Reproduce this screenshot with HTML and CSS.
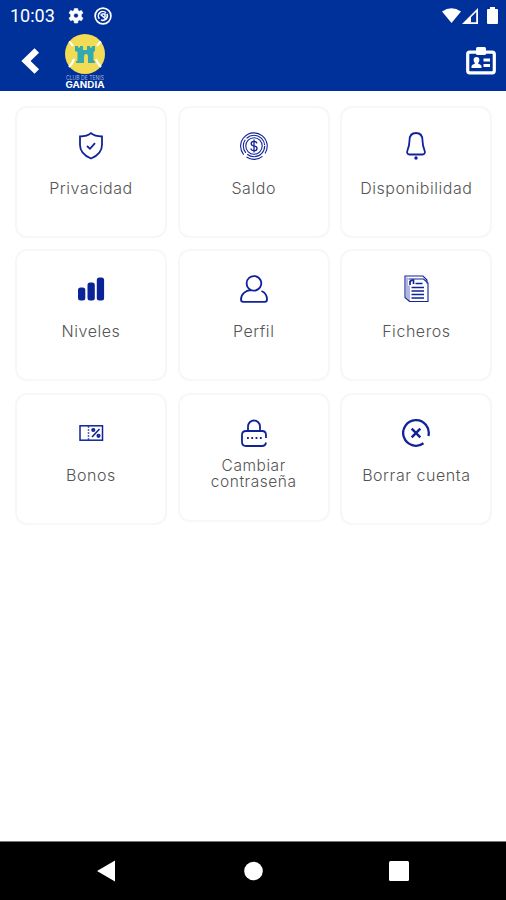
FILE: index.html
```html
<!DOCTYPE html>
<html lang="es">
<head>
  <meta charset="UTF-8" />
  <meta name="viewport" content="width=device-width, initial-scale=1.0">
  <title>Club de Tenis Gandia</title>
  <link rel="stylesheet" href="styles.css">
</head>
<body>

  <header class="header">
    <div class="status-bar">
      <span class="clock">10:03</span>
      <svg class="gear" width="16" height="16" viewBox="0 0 16 16">
        <path fill="#fff" stroke="#fff" stroke-width=".6" fill-rule="evenodd" d="M6.400.4h3.200l.4 2 1.300.8 2.100-.8L15 5l-1.700 1.600v2L15 10.200l-1.600 2.600-2.100-.8-1.300.8-.4 2.200H6.400L6 12.800 4.700 12l-2.100.8L1 10.200l1.700-1.600v-2L1 5l1.600-2.600 2.100.8L6 2.400zM8 5.200a2.400 2.400 0 1 0 0 4.800 2.400 2.400 0 0 0 0-4.800z"/>
      </svg>
      <svg class="sync" width="18" height="18" viewBox="0 0 18 18" fill="none" stroke="#fff">
        <circle cx="9" cy="9" r="7.900" stroke-width="1.700"/>
        <path d="M5.400 11.800a4.500 4.500 0 0 1 6.600-6.100M12.900 6.900a4.500 4.500 0 0 1-6 6" stroke-width="1.600"/>
        <path d="M6.500 7.500l6 5M7.500 7h3.500v3.200" stroke-width="1.500"/>
      </svg>
      <div class="signals">
        <svg width="19" height="15" viewBox="0 0 19 15"><path fill="#fff" d="M0 3.500Q9.500-3 19 3.500L9.500 15z"/></svg>
        <svg width="16" height="16" viewBox="0 0 16 16"><path fill="#fff" fill-rule="evenodd" d="M16 0v16H0zM8.500 9.700v4.500h5.700V4z"/><path fill="#fff" d="M4 13l5-5v6H4z"/></svg>
        <svg class="battery" width="11" height="17" viewBox="0 0 11 17"><path fill="#fff" d="M3 0h5v2h2q1 0 1 1v13q0 1-1 1H1q-1 0-1-1V3q0-1 1-1h2z"/></svg>
      </div>
    </div>

    <div class="app-bar">
      <svg class="back" width="19" height="26" viewBox="0 0 19 26">
        <path d="M15.800 2.500L5 13l10.800 10.500" fill="none" stroke="#fff" stroke-width="6.500"/>
      </svg>
      <svg class="logo" width="42" height="58" viewBox="0 0 42 58">
        <circle cx="21" cy="21" r="20" fill="#f2dc55"/>
        <path d="M5 8.500Q8 11 9 13M37 8.500Q34 11 33 13M5 34Q9 30 10 26M37 34Q33 30 32 26" fill="none" stroke="#fff" stroke-width="2.200"/>
        <path d="M11 13h3v1.500h2V13h3v4h4v-4h3v1.500h2V13h3v5l-1.500 1v8.500l1.500 1V30h-7v-6q0-3-2-3t-2 3v6h-8v-1.500l1.500-1V19L11 18z" fill="#35a9b0"/>
        <text class="logo-small" x="21" y="46.500" textLength="38" lengthAdjust="spacingAndGlyphs">CLUB DE TENIS</text>
        <text class="logo-name" x="21" y="54.500" textLength="39" lengthAdjust="spacingAndGlyphs">GANDIA</text>
      </svg>
      <svg class="badge" width="30" height="28" viewBox="0 0 30 28">
        <rect x="1.700" y="5.200" width="26.600" height="20.600" rx="2" fill="none" stroke="#fff" stroke-width="3.200"/>
        <rect x="10" y="0" width="10" height="8" rx="1.500" fill="#fff"/>
        <circle cx="10.500" cy="13" r="2.900" fill="#fff"/>
        <path d="M5.500 21v-1.500q0-2 3.200-2.500v-2h3.600v2q3.200.5 3.200 2.500V21z" fill="#fff"/>
        <path d="M17.500 13h6.500M17.500 18.500h6.500" stroke="#fff" stroke-width="2.800"/>
      </svg>
    </div>
  </header>

  <main class="grid">
    <div class="card">
      <svg class="icon" viewBox="0 0 28 28">
        <path d="M14 1.200c2.500 2.300 6 3.300 11 3.300v8.500c0 7-5 11-11 13.500C8 24 3 20 3 13V4.500c5 0 8.500-1 11-3.300z"/>
        <path d="M10 14l3 2.800 5-5.600"/>
      </svg>
      <span class="label">Privacidad</span>
    </div>
    <div class="card">
      <svg class="icon thin" viewBox="0 0 28 28">
        <path d="M3.600 22.600A13.300 13.300 0 1 1 25 21.500M22.500 24.300A13.300 13.300 0 0 1 6.500 25"/>
        <circle cx="14" cy="14" r="10.700" stroke-dasharray="24 2 14 2"/>
        <circle cx="14" cy="14" r="8.200"/>
        <path d="M17 11.300q-.5-2-3-2-2.800 0-2.800 2.200 0 2 2.800 2.400 3 .4 3 2.500 0 2.300-3 2.300-2.800 0-3.200-2.200M14 7.500v13" stroke-width="1.300"/>
      </svg>
      <span class="label">Saldo</span>
    </div>
    <div class="card">
      <svg class="icon" viewBox="0 0 28 28">
        <path d="M14 1C9.500 1 7.500 4 7.500 8.500c0 5-1 7.500-2.200 10.500-.7 2 .5 3.500 2.200 3.500h13c1.700 0 2.900-1.500 2.200-3.500-1.200-3-2.200-5.500-2.200-10.500C20.500 4 18.500 1 14 1z"/>
        <circle class="solid" cx="14" cy="26" r="1.700"/>
      </svg>
      <span class="label">Disponibilidad</span>
    </div>

    <div class="card">
      <svg class="icon" viewBox="0 0 28 28">
        <rect class="solid" x="1" y="12.500" width="7.300" height="13" rx="2.500"/>
        <rect class="solid" x="10.500" y="7.500" width="7.300" height="18" rx="2.500"/>
        <rect class="solid" x="19.800" y="2.500" width="7.300" height="23" rx="2.500"/>
      </svg>
      <span class="label">Niveles</span>
    </div>
    <div class="card">
      <svg class="icon" viewBox="0 0 28 28">
        <path d="M10 14.500a7.300 7.300 0 1 1 5.500 1M11 15c-5.500.5-10 4-10 9.500q0 2.300 2.300 2.300h21.400q2.300 0 2.300-2.300c0-4-2.200-7-5.500-8.500M9.500 14.200q2 1.800 6 1.300"/>
      </svg>
      <span class="label">Perfil</span>
    </div>
    <div class="card">
      <svg class="icon thin" viewBox="0 0 28 28">
        <path d="M6.500 4h15l4.500 4v18.500H7.500L3 22.500V1h18l4 4v3.500"/>
        <path d="M5 2.500v21M7 10.500v15.500" opacity=".6"/>
        <path d="M8 10V6.500l2-1.500h1.500v4" stroke-width="1.700"/>
        <path d="M13.500 8.500h7M9.500 12.500h12.500M9.500 16h12.500M9.500 19.500h12.500M9.500 23h12.500" stroke-width="1.500"/>
      </svg>
      <span class="label">Ficheros</span>
    </div>

    <div class="card">
      <svg class="icon" viewBox="0 0 28 28">
        <rect x="3" y="6.800" width="22.500" height="14.400" stroke-width="1.500"/>
        <path d="M11.500 7v14" stroke-width="1.500" stroke-dasharray="2 1" opacity=".7"/>
        <path d="M15 18l7.500-8" stroke-width="1.600"/>
        <circle cx="16.300" cy="11" r="1.200"/>
        <circle cx="21.500" cy="16.800" r="1.200"/>
      </svg>
      <span class="label">Bonos</span>
    </div>
    <div class="card short">
      <svg class="icon" viewBox="0 0 28 28">
        <path d="M8 12V7.500a6 6 0 0 1 12 0V12"/>
        <path d="M26 19v-3q0-4-4-4H6q-4 0-4 4v7q0 4 4 4h16q3.500 0 4-3.500"/>
        <path d="M7 19h15" stroke-width="2" stroke-dasharray="1.800 2.500"/>
      </svg>
      <span class="label">Cambiar<br>contraseña</span>
    </div>
    <div class="card">
      <svg class="icon bold" viewBox="0 0 28 28">
        <path d="M26.400 17A12.800 12.800 0 1 0 21.500 24.300"/>
        <path d="M9.700 9.700l8.600 8.600M18.300 9.700l-8.600 8.600" stroke-width="2.500"/>
      </svg>
      <span class="label">Borrar cuenta</span>
    </div>
  </main>

  <nav class="nav-bar">
    <svg width="20" height="22" viewBox="0 0 20 22"><path fill="#fff" d="M18 .5v21L0 11z"/></svg>
    <svg width="20" height="20" viewBox="0 0 20 20"><circle cx="10.500" cy="10" r="9.300" fill="#fff"/></svg>
    <svg width="20" height="20" viewBox="0 0 20 20"><rect width="20" height="20" rx="1.500" fill="#fff"/></svg>
  </nav>

</body>
</html>
```
FILE: styles.css
```css
* {
  box-sizing: border-box;
}

body {
  margin: 0;
  height: 900px;
  background: #fff;
  font-family: Inter, "Liberation Sans", sans-serif;
  display: flex;
  flex-direction: column;
}

svg {
  display: block;
  flex-shrink: 0;
}

.header {
  height: 91px;
  background: #003099;
  color: #fff;
}

.status-bar {
  height: 31px;
  padding: 0 8px 0 10px;
  display: flex;
  align-items: center;
}

.clock {
  width: 58px;
  font: 18px/31px Roboto, sans-serif;
}

.sync {
  margin-left: 10px;
}

.signals {
  margin-left: auto;
  display: flex;
  align-items: center;
  gap: 1px;
}

.battery {
  margin-left: 8px;
}

.app-bar {
  height: 60px;
  padding: 0 10px 0 21px;
  display: flex;
  align-items: center;
}

.logo {
  margin: 1px 0 0 24px;
}

.logo-small {
  font-size: 5.5px;
  fill: #a9b8e0;
  text-anchor: middle;
}

.logo-name {
  font-size: 8.5px;
  font-weight: 700;
  fill: #fff;
  text-anchor: middle;
}

.badge {
  margin-left: auto;
}

.grid {
  flex: 1;
  padding: 15px 14px 0 15px;
  display: grid;
  grid-template-columns: repeat(3, 152px);
  grid-auto-rows: 132px;
  column-gap: 10.7px;
  row-gap: 11.4px;
  align-content: start;
}

.card {
  border: 2px solid #f7f7f7;
  border-radius: 12px;
  padding-top: 24px;
  display: flex;
  flex-direction: column;
  align-items: center;
}

.short {
  height: 129px;
}

.icon {
  width: 28px;
  height: 28px;
  fill: none;
  stroke: #10239a;
  stroke-width: 1.8;
}

.thin {
  stroke-width: 1.1;
}

.bold {
  stroke-width: 2.3;
}

.icon .solid {
  fill: #0a2396;
  stroke: none;
}

.label {
  height: 32px;
  margin-top: 12px;
  display: flex;
  align-items: center;
  text-align: center;
  font-size: 16px;
  font-weight: 300;
  line-height: 16px;
  letter-spacing: 0.55px;
  color: #555;
}

.short .label {
  margin-top: 11px;
  font-size: 15.5px;
}

.nav-bar {
  height: 59px;
  padding: 0 97px;
  background: #000;
  border-top: 1px solid #777;
  display: flex;
  align-items: center;
  justify-content: space-between;
}
```
